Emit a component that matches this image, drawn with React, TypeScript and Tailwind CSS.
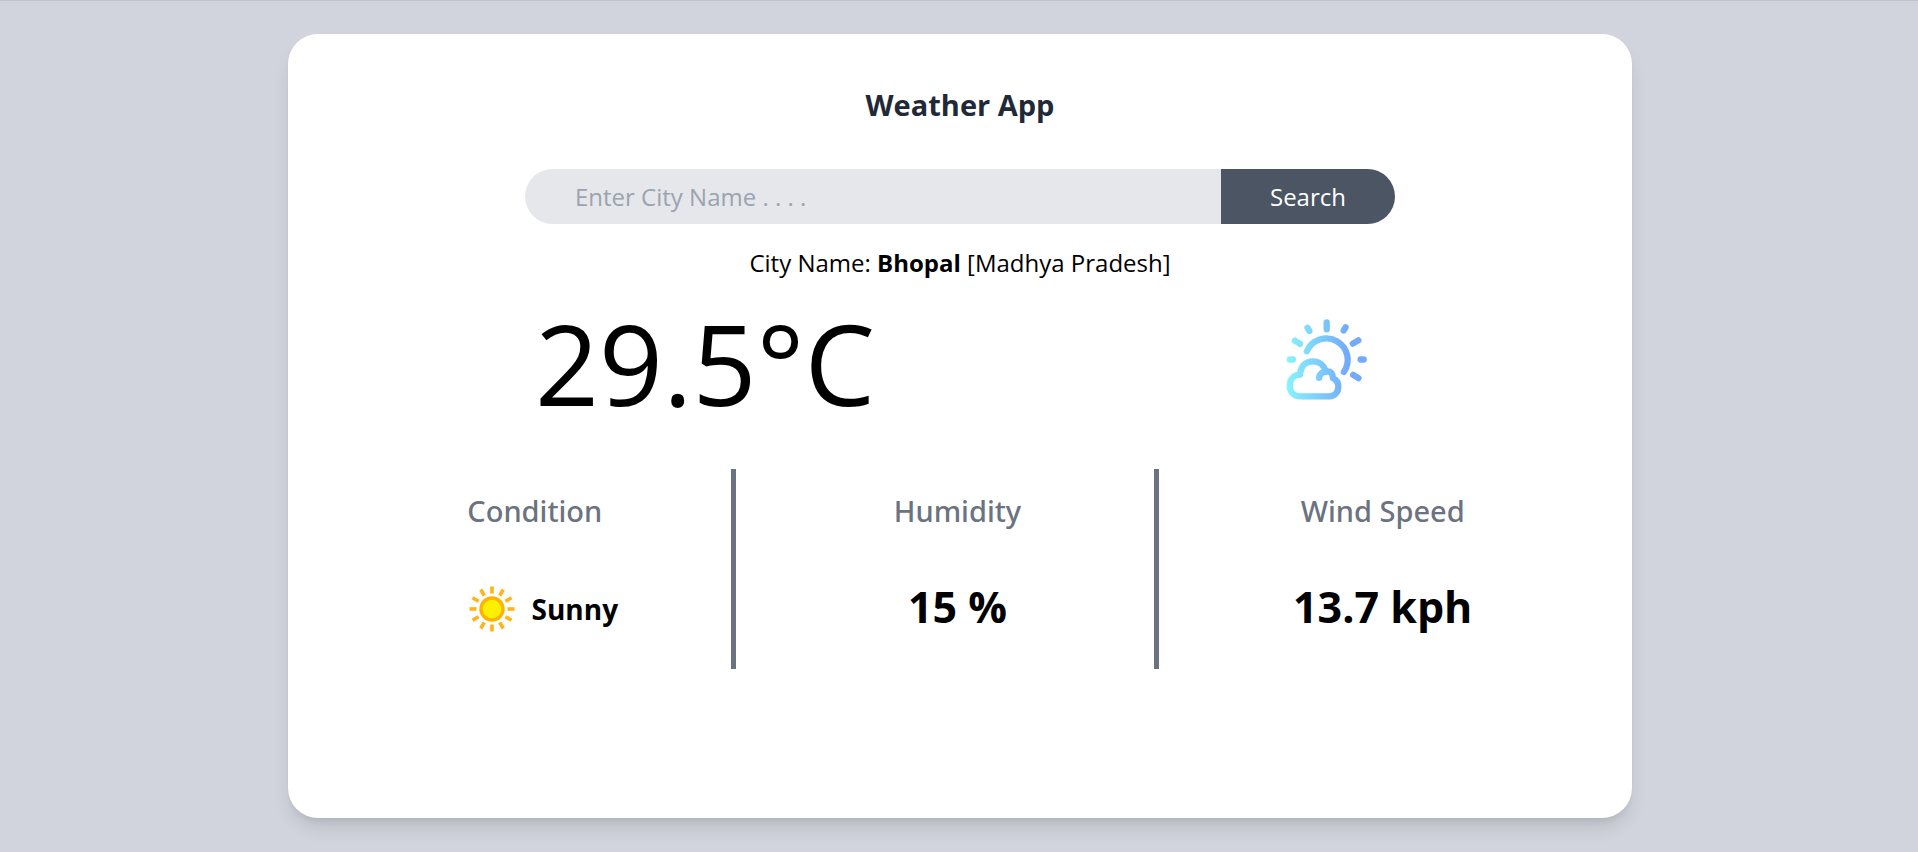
import { useState, type ReactNode } from "react";

function PartlyCloudyIcon() {
  return (
    <svg viewBox="70 50 255 255" className="size-[85px]" fill="none" stroke="url(#sky)" strokeWidth="19" strokeLinecap="round" strokeLinejoin="round" aria-hidden="true">
      <defs>
        <linearGradient id="sky" gradientUnits="userSpaceOnUse" x1="80" y1="0" x2="262" y2="0">
          <stop offset="0" stopColor="#87f3fd" />
          <stop offset="1" stopColor="#73aafa" />
        </linearGradient>
      </defs>
      <path d="M198 66.5V87M140.500 82.500L146 92M102.500 121L118 130.500M87.500 177.500H96.500M254.500 81L249 90.500M293 120L276.500 130M300 177.500H309M277.500 223.500L293.500 233.500" />
      <path d="M138.500 152.500A64 64 0 1 1 249.500 215" />
      <path d="M117 223C97 224 87.500 239 87.500 256C87.500 275 100 288 118 288H206C222 288 233 275 233 259C233 247 227 238 216.500 233.500C216 219 211 213.500 201 213.500C186 213.500 176 220 175.500 232.500" />
      <path d="M118 222C120 198 135 183 156 183C176 183 190 195 195 212" />
    </svg>
  );
}

function SunIcon() {
  const angles = Array.from({ length: 12 }, (_, i) => i * 30);
  return (
    <svg viewBox="0 0 80 80" className="size-20" aria-hidden="true">
      <circle cx="40" cy="40" r="11" fill="#fff000" stroke="#ffb300" strokeWidth="3.400" />
      {angles.map((a) => (
        <path key={a} d="M40 17.500V24.500" stroke="#ffb414" strokeWidth="3.600" transform={`rotate(${a} 40 40)`} />
      ))}
    </svg>
  );
}

function Stat({ label, divided, children }: { label: string; divided?: boolean; children: ReactNode }) {
  return (
    <div className={`flex h-50 flex-col items-center ${divided ? "border-r-[5px] border-[#6b7280]" : ""}`}>
      <h2 className="mt-6 font-['Noto_Sans','Open_Sans',sans-serif] text-[29px] leading-9 font-medium text-[#6b7280]">{label}</h2>
      <div className="mt-10 flex h-20 items-center font-bold">{children}</div>
    </div>
  );
}

export default function App() {
  const [city, setCity] = useState("");
  return (
    <div className="flex min-h-screen items-center justify-center bg-[#d1d4dc] pl-0.5 font-['Open_Sans','Noto_Sans',sans-serif] text-black inset-shadow-[0_1px_0_#c1c4cb]">
      <main className="flex min-h-[92vh] w-[70.1%] flex-col items-center rounded-[30px] bg-white shadow-[0_12px_19px_-4px_rgba(0,0,0,0.12),0_5px_8px_-5px_rgba(0,0,0,0.1)]">
        <h1 className="mt-[51px] text-[29px] leading-10 font-bold text-[#1f2937]">Weather App</h1>
        <form className="mt-11 flex h-[55px] w-[870px] max-w-full overflow-hidden rounded-full text-[24px]" onSubmit={(e) => e.preventDefault()}>
          <input
            type="text"
            aria-label="City name"
            placeholder="Enter City Name . . . ."
            value={city}
            onChange={(e) => setCity(e.target.value)}
            className="w-4/5 bg-[#e5e7eb] px-[50px] outline-none placeholder:text-[#9ca3af]"
          />
          <button type="submit" className="w-1/5 bg-[#4b5563] text-white">Search</button>
        </form>
        <p className="mt-[23px] text-[24px] leading-8">
          City Name: <strong className="font-bold">Bhopal</strong> [Madhya Pradesh]
        </p>
        <section className="mt-5 flex h-[120px] w-[870px] max-w-full items-center justify-between pr-[26px] pl-[10px]">
          <p className="pt-2 text-[112px] leading-[120px]">29.5°C</p>
          <PartlyCloudyIcon />
        </section>
        <section className="mt-[50px] grid w-full grid-cols-3 gap-[25px] px-[50px]">
          <Stat label="Condition" divided>
            <SunIcon />
            <span className="text-[28px]">Sunny</span>
          </Stat>
          <Stat label="Humidity" divided>
            <span className="pb-1 text-[43px]">15 %</span>
          </Stat>
          <Stat label="Wind Speed">
            <span className="pb-1 text-[43px]">13.7 kph</span>
          </Stat>
        </section>
      </main>
    </div>
  );
}
